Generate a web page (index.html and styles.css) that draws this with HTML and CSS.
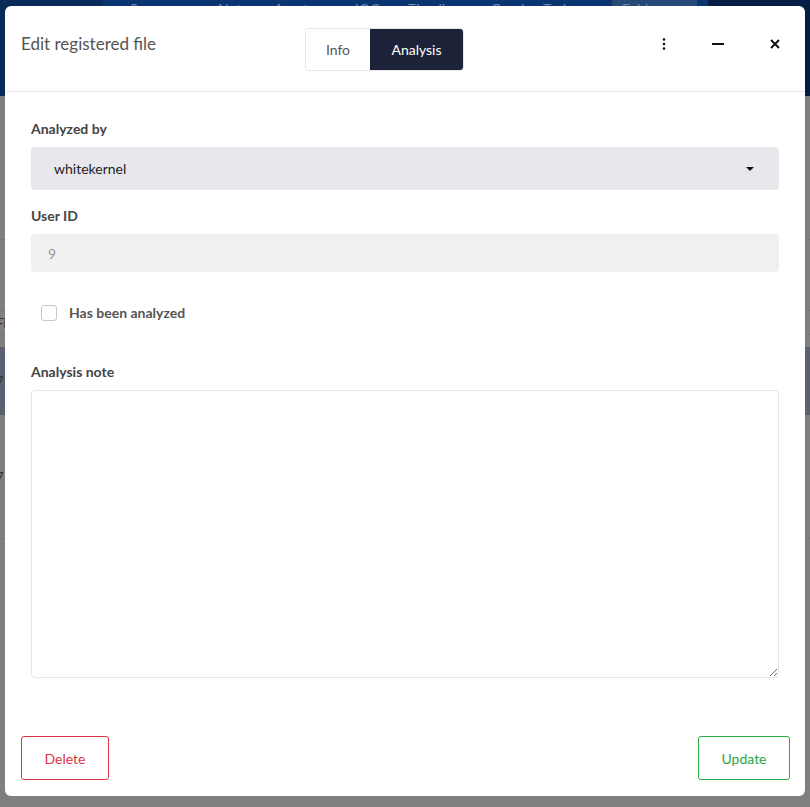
FILE: index.html
```html
<!DOCTYPE html>
<html>
<head>
<meta charset="utf-8">
<link rel="stylesheet" href="styles.css">
</head>
<body>
<div class="page">
  <div class="navbar">
    <div class="nav-left"></div>
    <div class="nav-mid">
      <span class="n1">Summary</span><span class="n2">Notes</span><span class="n3">Assets</span><span class="n4">IOCs</span><span class="n5">Timeline</span><span class="n6">Graph</span><span class="n7">Tasks</span><span class="n8 active">Evidence</span>
    </div>
    <div class="nav-right"></div>
  </div>
  <div class="bg-content">
    <div class="bg-row r1"></div>
    <div class="bg-row r2"></div>
    <div class="bg-row r3"><span>Fi</span></div>
    <div class="bg-row r3b"></div>
    <div class="bg-row r4 hl"><span>7</span></div>
    <div class="bg-row r5"><span>7</span></div>
    <div class="bg-row r6"></div>
  </div>
</div>

<div class="modal">
  <div class="modal-header">
    <div class="modal-title">Edit registered file</div>
    <div class="tabs">
      <div class="tab">Info</div>
      <div class="tab active">Analysis</div>
    </div>
    <div class="header-icons">
      <button class="icon-btn" aria-label="More">
        <svg width="16" height="16" viewBox="0 0 16 16"><circle cx="8" cy="3.5" r="1.3"/><circle cx="8" cy="8" r="1.3"/><circle cx="8" cy="12.5" r="1.3"/></svg>
      </button>
      <button class="icon-btn" aria-label="Minimize">
        <svg width="16" height="16" viewBox="0 0 16 16"><rect x="2" y="7" width="12" height="2"/></svg>
      </button>
      <button class="icon-btn" aria-label="Close">
        <svg width="16" height="16" viewBox="0 0 16 16"><path d="M4 4 L12 12 M12 4 L4 12" stroke="#111" stroke-width="2" fill="none"/></svg>
      </button>
    </div>
  </div>

  <div class="modal-body">
    <label class="field-label">Analyzed by</label>
    <div class="select">
      <span>whitekernel</span>
      <span class="caret"></span>
    </div>

    <label class="field-label">User ID</label>
    <div class="input disabled">9</div>

    <div class="check-row">
      <span class="checkbox"></span>
      <span class="check-label">Has been analyzed</span>
    </div>

    <label class="field-label">Analysis note</label>
    <textarea class="textarea"></textarea>
  </div>

  <div class="modal-footer">
    <button class="btn btn-delete">Delete</button>
    <button class="btn btn-update">Update</button>
  </div>
</div>
</body>
</html>
```

FILE: styles.css
```css
* { box-sizing: border-box; }
html, body {
  margin: 0;
  padding: 0;
  height: 100%;
}
body {
  background: #7f7f7f;
  font-family: Lato, "Open Sans", "Liberation Sans", sans-serif;
  overflow: hidden;
}
.page {
  width: 810px;
  height: 807px;
}
.navbar {
  height: 96px;
  display: flex;
}
.nav-left {
  width: 103px;
  background: #0a2a5a;
}
.nav-mid {
  width: 605px;
  background: #0b3572;
  display: flex;
  padding-left: 27px;
  padding-top: 2px;
  font-size: 14px;
  color: #7089ad;
  line-height: 14px;
  white-space: nowrap;
}
.nav-mid span { display: block; height: 20px; overflow: hidden; }
.n1 { width: 88px; }
.n2 { width: 56px; }
.n3 { width: 81px; }
.n4 { width: 53px; }
.n5 { width: 83px; }
.n6 { width: 52px; }
.n7 { width: 69px; }
.nav-mid .active {
  background: #284a78;
  width: 85px;
  padding-left: 10px;
  height: 22px;
  margin-top: -2px;
  padding-top: 2px;
}
.nav-right {
  flex: 1;
  background: #031d45;
}
.bg-content {
  display: flex;
  flex-direction: column;
}
.bg-row {
  border-bottom: 1px solid #747474;
  font-size: 13px;
  color: #333;
  display: flex;
  align-items: center;
}
.bg-row span { margin-left: -4px; }
.r1 { height: 144px; }
.r2 { height: 71px; }
.r3 { height: 24px; }
.r3b { height: 12px; border-bottom: none; }
.r4 { height: 68px; }
.hl { background: #5b6170; border-bottom: none; }
.r5 { height: 124px; }
.r6 { height: 108px; border-bottom: none; }

.modal {
  position: absolute;
  left: 5px;
  top: 6px;
  width: 800px;
  height: 790px;
  background: #fff;
  border-radius: 6px;
  display: flex;
  flex-direction: column;
}
.modal-header {
  height: 86px;
  border-bottom: 1px solid #e6e6e6;
  display: flex;
  align-items: center;
  padding: 0 16px;
  flex-shrink: 0;
}
.modal-title {
  width: 284px;
  font-size: 17px;
  color: #555;
  margin-top: -11px;
}
.tabs {
  display: flex;
  height: 43px;
  border: 1px solid #e6e6e6;
  border-radius: 4px;
  overflow: hidden;
  margin-top: 1px;
}
.tab {
  display: flex;
  align-items: center;
  justify-content: center;
  font-size: 14px;
  color: #555;
  background: #fff;
  width: 64px;
}
.tab.active {
  background: #1c2237;
  color: #fff;
  width: 93px;
}
.header-icons {
  margin-left: auto;
  display: flex;
  align-items: center;
  margin-top: -10px;
  margin-right: -6px;
}
.icon-btn {
  width: 40px;
  height: 32px;
  border: none;
  background: transparent;
  padding: 0;
  display: flex;
  align-items: center;
  justify-content: center;
  fill: #111;
}
.icon-btn + .icon-btn { margin-left: 14px; }
.icon-btn:last-child { margin-left: 17px; }
.icon-btn svg { display: block; }

.modal-body {
  padding: 27px 26px 0 26px;
  display: flex;
  flex-direction: column;
  flex: 1;
}
.field-label {
  font-size: 14px;
  font-weight: 700;
  color: #444;
  line-height: 20px;
  margin-bottom: 8px;
}
.select {
  height: 43px;
  background: #e8e8ec;
  border-radius: 4px;
  display: flex;
  align-items: center;
  justify-content: space-between;
  padding: 0 25px 0 23px;
  font-size: 14px;
  color: #222;
  margin-bottom: 16px;
}
.caret {
  width: 0;
  height: 0;
  border-left: 4px solid transparent;
  border-right: 4px solid transparent;
  border-top: 4px solid #111;
}
.input {
  height: 38px;
  border-radius: 4px;
  background: #f0f0f0;
  font-size: 14px;
  color: #999;
  display: flex;
  align-items: center;
  padding-left: 17px;
}
.check-row {
  display: flex;
  align-items: center;
  margin-top: 33px;
  padding-left: 10px;
  height: 16px;
  margin-bottom: 41px;
}
.checkbox {
  width: 16px;
  height: 16px;
  border: 1px solid #c8c8c8;
  border-radius: 3px;
  background: #fff;
}
.check-label {
  margin-left: 12px;
  font-size: 14px;
  font-weight: 700;
  color: #555;
  margin-top: -1px;
}
.textarea {
  height: 288px;
  width: 100%;
  border: 1px solid #e6e6ea;
  border-radius: 4px;
  resize: vertical;
  font-family: inherit;
  display: block;
  margin: 0;
}
.modal-footer {
  display: flex;
  justify-content: space-between;
  padding: 0 15px 16px 16px;
}
.btn {
  height: 44px;
  background: #fff;
  border-radius: 3px;
  font-family: inherit;
  font-size: 14px;
  padding: 0;
  cursor: pointer;
}
.btn-delete {
  width: 88px;
  border: 1px solid #dc3545;
  color: #dc3545;
}
.btn-update {
  width: 92px;
  border: 1px solid #28a745;
  color: #28a745;
}
```
